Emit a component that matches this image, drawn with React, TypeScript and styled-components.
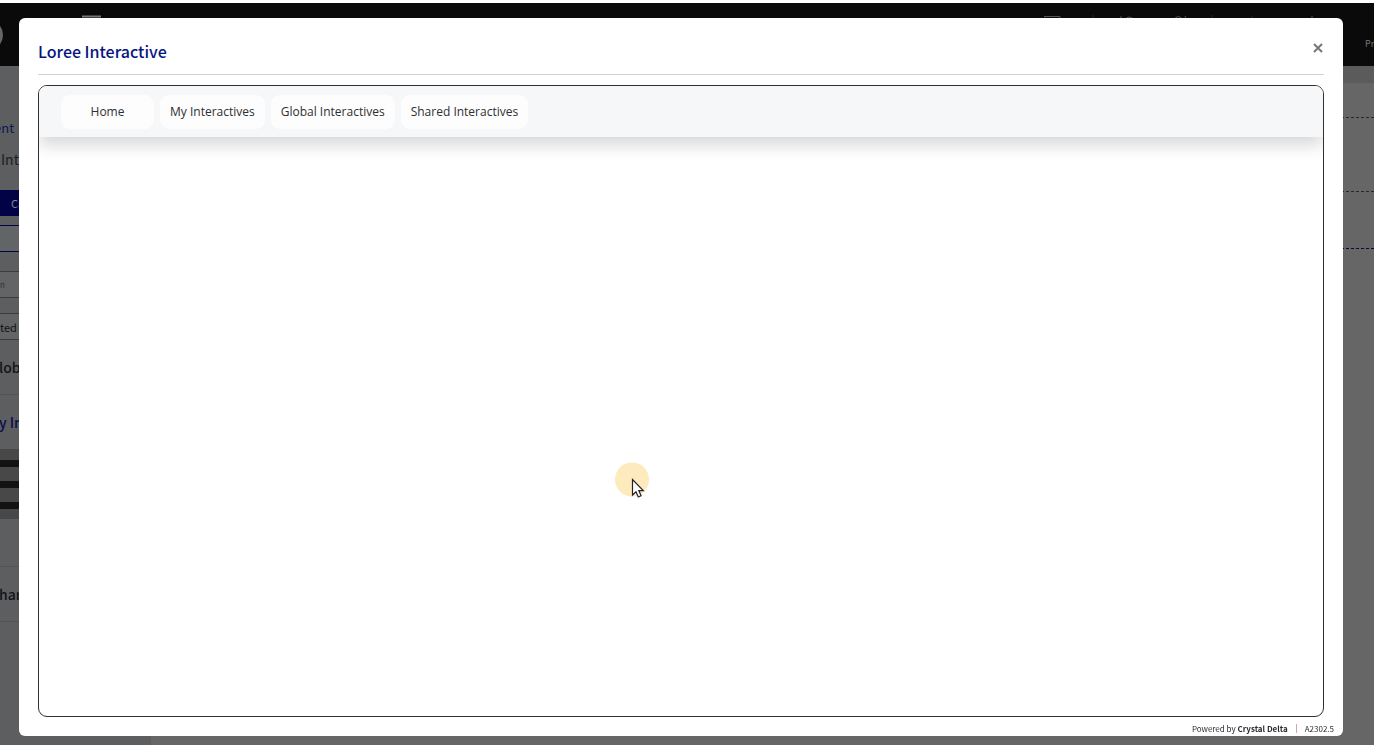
import React from "react";
import styled, { createGlobalStyle } from "styled-components";

const GlobalStyle = createGlobalStyle`
  * { box-sizing: border-box; }
  body {
    margin: 0;
    background: #666666;
    font-family: "Noto Sans CJK SC", "Noto Sans", sans-serif;
    overflow: hidden;
  }
  button, input, select { font: inherit; }
`;

const Page = styled.div`
  display: flex;
  flex-direction: column;
  height: 100vh;
  border-top: 3px solid #ffffff;
  overflow: hidden;
`;

const TopBar = styled.header`
  display: flex;
  flex: none;
  justify-content: space-between;
  height: 63px;
  background: #0a0a0a;
  color: #777777;
`;

const BrandArea = styled.div`
  display: flex;
  align-items: flex-start;
  gap: 79px;
`;

const Logo = styled.svg`
  width: 3px;
  height: 32px;
  margin-top: 16px;
`;

const MenuIcon = styled.svg`
  width: 19px;
  height: 16px;
  margin-top: 12px;
`;

const TopTools = styled.div`
  display: flex;
  align-items: flex-start;
`;

const ToolStrip = styled.svg`
  width: 280px;
  height: 20px;
  margin-top: 12px;
`;

const Preview = styled.span`
  width: 9px;
  margin: 33px 0 0 41px;
  font-size: 9px;
  line-height: 16px;
  white-space: nowrap;
`;

const Workspace = styled.div`
  display: flex;
  flex: 1;
  min-height: 0;
`;

const Sidebar = styled.aside`
  flex: none;
  width: 151px;
  padding-top: 47px;
  background: #5c5e60;
  color: #17181a;
  overflow: hidden;
`;

const SideText = styled.p<{ $accent?: boolean }>`
  margin: 0 0 1px;
  font-size: ${(p) => (p.$accent ? 13 : 14)}px;
  line-height: 30px;
  text-indent: ${(p) => (p.$accent ? -6 : 1)}px;
  color: ${(p) => (p.$accent ? "#12144f" : "#1c1d1f")};
  white-space: pre;
`;

const SideButton = styled.button<{ $outlined?: boolean }>`
  display: block;
  width: 100%;
  height: ${(p) => (p.$outlined ? 27 : 26)}px;
  margin: ${(p) => (p.$outlined ? 0 : 16)}px 0 9px;
  padding: 0 11px;
  border: 1px solid #020246;
  border-width: 1px 0;
  background: ${(p) => (p.$outlined ? "#626466" : "#020246")};
  color: #85868c;
  font-size: 11px;
  text-align: left;
`;

const SearchInput = styled.input`
  display: block;
  width: 100%;
  height: 27px;
  margin: 19px 0 15px;
  padding: 0;
  border: 1px solid #3b3c3e;
  border-width: 1px 0;
  border-radius: 0;
  background: #626466;
  color: #303133;
  font-size: 8px;
`;

const FilterSelect = styled.select`
  display: block;
  width: 100%;
  height: 27px;
  padding: 0;
  appearance: none;
  border: 1px solid #3b3c3e;
  border-width: 1px 0;
  border-radius: 0;
  background: #626466;
  color: #111214;
  font-size: 11px;
`;

const Section = styled.h3<{ $accent?: boolean; $ruled?: boolean }>`
  height: ${(p) => (p.$accent ? 54 : 55)}px;
  margin: 0;
  border-bottom: ${(p) => (p.$ruled ? "1px solid #515355" : "0")};
  color: ${(p) => (p.$accent ? "#090b4c" : "#131416")};
  font-size: 14px;
  font-weight: 500;
  line-height: 54px;
  text-indent: -1px;
  white-space: nowrap;
`;

const Thumbnail = styled.div`
  display: flex;
  flex-direction: column;
  gap: 14px;
  height: 70px;
  padding-top: 11px;
  background: #484848;
`;

const ThumbnailBar = styled.div`
  height: 7px;
  background: #131313;
`;

const ThumbnailGap = styled.div`
  height: 48px;
  border-bottom: 1px solid #515355;
`;

const Canvas = styled.main`
  flex: 1;
  border-top: 17px solid #5b5b5b;
  background: #666666;
`;

const CanvasRow = styled.div<{ $height: number; $accent?: boolean }>`
  height: ${(p) => p.$height}px;
  border-bottom: 1px dashed ${(p) => (p.$accent ? "#050548" : "#242830")};
`;

const Dialog = styled.section`
  position: fixed;
  inset: 18px 31px 9px 19px;
  display: flex;
  flex-direction: column;
  padding: 0 19px;
  border-radius: 6px;
  background: #ffffff;
`;

const DialogHeader = styled.header`
  display: flex;
  flex: none;
  justify-content: space-between;
  height: 57px;
  margin-bottom: 10px;
  border-bottom: 1px solid #d2d3d5;
`;

const DialogTitle = styled.h1`
  margin: 18px 0 0;
  color: #061481;
  font-size: 16px;
  font-weight: 500;
  line-height: 30px;
`;

const CloseButton = styled.button`
  display: flex;
  align-items: center;
  justify-content: center;
  width: 12px;
  height: 20px;
  margin-top: 20px;
  padding: 0;
  border: 0;
  background: none;
  color: #777777;
`;

const Frame = styled.div`
  flex: 1;
  min-height: 0;
  border: 1px solid #303030;
  border-radius: 9px;
  overflow: hidden;
`;

const Nav = styled.nav`
  display: flex;
  align-items: center;
  gap: 6px;
  height: 51px;
  padding-left: 22px;
  background: #f6f7f9;
  box-shadow: 0 8px 16px rgba(0, 0, 0, 0.16);
`;

const Tab = styled.button`
  min-width: 93px;
  height: 34px;
  padding: 0 10px;
  border: 0;
  border-radius: 9px;
  background: #fdfdfe;
  color: #2d2f31;
  font-family: "Open Sans", "Noto Sans", sans-serif;
  font-size: 12px;
  line-height: 20px;
  white-space: nowrap;
`;

const DialogFooter = styled.footer`
  display: flex;
  flex: none;
  align-items: center;
  justify-content: flex-end;
  gap: 8px;
  height: 19px;
  margin-right: -10px;
  padding-top: 4px;
  color: #2b2c33;
  font-size: 8px;
  line-height: 12px;

  b { font-weight: 600; }
`;

const Divider = styled.span`
  width: 1px;
  height: 9px;
  background: #c9a9a9;
`;

const Pointer = styled.svg`
  position: fixed;
  left: 614px;
  top: 462px;
  width: 36px;
  height: 38px;
  pointer-events: none;
`;

const tabs = ["Home", "My Interactives", "Global Interactives", "Shared Interactives"];

export default function App() {
  return (
    <>
      <GlobalStyle />
      <Page>
        <TopBar>
          <BrandArea>
            <Logo viewBox="0 0 3 32" aria-hidden="true">
              <circle cx="-13" cy="16" r="16" fill="#666666" />
            </Logo>
            <MenuIcon viewBox="0 0 19 16" aria-hidden="true">
              <path d="M0 1.5h19M0 8h19M0 14h19" stroke="#777777" strokeWidth="2" />
            </MenuIcon>
          </BrandArea>
          <TopTools>
            <ToolStrip viewBox="0 0 280 20" fill="none" stroke="#555555" aria-hidden="true">
              <path d="M0 1.5h16v12H0zM77 1v12M81 5q3-6 10 0M129 6q5-9 11 0M141 1l3 7M268 1v12" />
              <path d="M49 0v16M168 0v16M208 1v12" stroke="#292929" />
            </ToolStrip>
            <Preview>Pr</Preview>
          </TopTools>
        </TopBar>
        <Workspace>
          <Sidebar>
            <SideText $accent>ent</SideText>
            <SideText>Int</SideText>
            <SideButton>Cr</SideButton>
            <SideButton $outlined aria-label="Secondary action" />
            <SearchInput aria-label="Search" defaultValue="n" />
            <FilterSelect aria-label="Filter">
              <option>ted</option>
            </FilterSelect>
            <Section $ruled>lob</Section>
            <Section $accent>y In</Section>
            <Thumbnail>
              <ThumbnailBar />
              <ThumbnailBar />
              <ThumbnailBar />
            </Thumbnail>
            <ThumbnailGap />
            <Section $ruled>har</Section>
          </Sidebar>
          <Canvas>
            <CanvasRow $height={35} />
            <CanvasRow $height={74} />
            <CanvasRow $height={57} $accent />
          </Canvas>
        </Workspace>
      </Page>

      <Dialog role="dialog" aria-modal="true" aria-labelledby="dialog-title">
        <DialogHeader>
          <DialogTitle id="dialog-title">Loree Interactive</DialogTitle>
          <CloseButton aria-label="Close">
            <svg width="10" height="10" viewBox="0 0 10 10" aria-hidden="true">
              <path d="M1 1l8 8M9 1L1 9" stroke="currentColor" strokeWidth="2" />
            </svg>
          </CloseButton>
        </DialogHeader>
        <Frame>
          <Nav aria-label="Interactives">
            {tabs.map((label) => (
              <Tab key={label}>{label}</Tab>
            ))}
          </Nav>
        </Frame>
        <DialogFooter>
          <span>
            Powered by <b>Crystal Delta</b>
          </span>
          <Divider />
          <span>A2302.5</span>
        </DialogFooter>
      </Dialog>

      <Pointer viewBox="0 0 36 38" aria-hidden="true">
        <circle cx="18" cy="17.5" r="17" fill="#fdebbd" />
        <path
          d="M18.500 17.500v15.500l3.500-3.300 2.300 5.300 2.800-1.200-2.300-5.200h4.500z"
          fill="#ffffff"
          stroke="#26202a"
          strokeWidth="1.200"
        />
      </Pointer>
    </>
  );
}
